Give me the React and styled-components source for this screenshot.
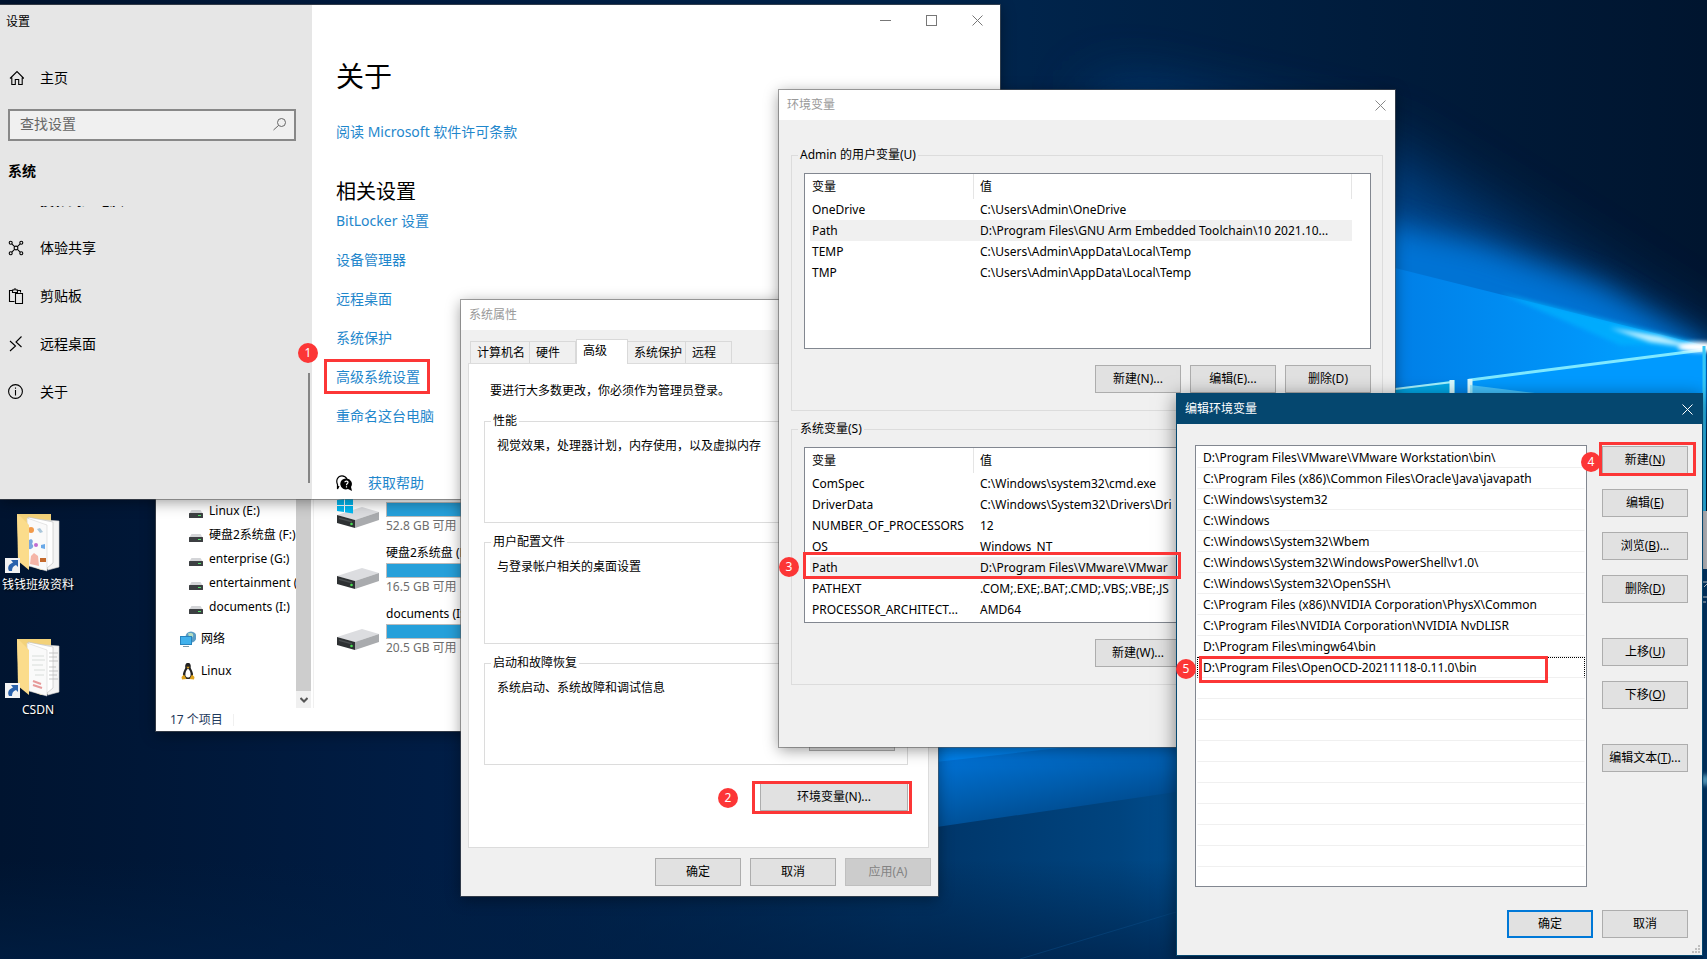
import styled, { createGlobalStyle } from "styled-components";

const GlobalStyle = createGlobalStyle`
    * {
        box-sizing: border-box;
    }
    body {
        margin: 0;
        overflow: hidden;
        font-family: "Noto Sans", "Noto Sans CJK SC", sans-serif;
        font-size: 12px;
        line-height: 16px;
        color: #000;
    }
    button, input {
        font: inherit;
        color: inherit;
    }
    ul {
        margin: 0;
        padding: 0;
        list-style: none;
    }
`

/* ---------- desktop ---------- */

const Desktop = styled.main`
    position: relative;
    width: 100%;
    height: 100vh;
    overflow: hidden;
    background: #001a3b;
`

const WallpaperSvg = styled.svg`
    position: absolute;
    inset: 0;
    width: 100%;
    height: 100%;
`

const Shortcut = styled.a`
    position: absolute;
    left: 0;
    top: ${props => props.$top}px;
    width: 76px;
    display: flex;
    flex-direction: column;
    align-items: center;
    gap: 4px;
    color: #fff;
    text-decoration: none;
    white-space: nowrap;
    text-shadow: 1px 1px 2px #000;
`

const EdgeIcon = styled.svg`
    position: absolute;
    right: 0;
    top: 511px;
`

/* ---------- windows ---------- */

const Window = styled.section`
    position: absolute;
    left: ${props => props.$x}px;
    top: ${props => props.$y}px;
    width: ${props => props.$w}px;
    height: ${props => props.$h}px;
    display: flex;
    flex-direction: ${props => props.$row ? 'row' : 'column'};
    background: ${props => props.$bg || '#f0f0f0'};
    box-shadow: 0 0 0 1px rgba(90, 90, 90, 0.55), 0 3px 14px rgba(0, 0, 0, 0.4);
`

const ActiveWindow = styled(Window)`
    border: 1px solid #05476f;
    box-shadow: 0 4px 18px rgba(0, 0, 0, 0.5);
`

const TitleBar = styled.header`
    flex: none;
    height: 30px;
    padding: 0 0 0 8px;
    display: flex;
    align-items: center;
    justify-content: space-between;
    background: ${props => props.$active ? '#05476f' : '#fff'};
    color: ${props => props.$active ? '#fff' : '#999'};
`

const CaptionButton = styled.button`
    width: ${props => props.$wide ? 46 : 30}px;
    height: ${props => props.$wide ? 31 : 29}px;
    padding: 0;
    border: 0;
    background: none;
    display: flex;
    align-items: center;
    justify-content: center;
`

const Button = styled.button`
    flex: none;
    width: ${props => props.$wide ? 148 : 86}px;
    height: 28px;
    padding: 0;
    border: ${props => props.$primary ? '2px solid #0078d7' : '1px solid #adadad'};
    background: #e1e1e1;
    white-space: nowrap;
    &:disabled {
        background: #ccc;
        border-color: #bfbfbf;
        color: #838383;
    }
`

const ButtonRow = styled.div`
    display: flex;
    justify-content: flex-end;
    gap: 8px;
`

const Group = styled.fieldset`
    margin: 0;
    min-width: 0;
    height: ${props => props.$h}px;
    padding: 0 11px 0 6px;
    border: 1px solid #dcdcdc;
    legend {
        padding: 0 2px;
    }
`

/* ---------- settings ---------- */

const Sidebar = styled.nav`
    flex: none;
    width: 312px;
    background: #e6e6e6;
    font-size: 14px;
    line-height: 20px;
    display: flex;
    flex-direction: column;
`

const AppName = styled.div`
    height: 32px;
    padding-left: 6px;
    font-size: 12px;
    line-height: 34px;
`

const NavItem = styled.a`
    display: flex;
    align-items: center;
    gap: 16px;
    height: 48px;
    padding-left: 8px;
    color: #000;
    text-decoration: none;
    svg {
        flex: none;
    }
`

const HomeItem = styled(NavItem)`
    height: 40px;
    margin-top: 21px;
`

const SearchBox = styled.label`
    display: flex;
    align-items: center;
    height: 32px;
    margin: 11px 16px 0 8px;
    padding: 0 7px 2px 10px;
    border: 2px solid #888;
    background: #f0f0f0;
    input {
        flex: 1;
        min-width: 0;
        padding: 0;
        border: 0;
        outline: 0;
        background: none;
    }
    input::placeholder {
        color: #666;
        opacity: 1;
    }
`

const Category = styled.h2`
    margin: 18px 0 23px 8px;
    font-size: 14px;
    line-height: 24px;
`

const NavScroll = styled.div`
    flex: 1;
    min-height: 0;
    display: flex;
    justify-content: space-between;
    overflow: hidden;
    ul {
        margin-top: -30px;
    }
`

const ScrollThumb = styled.div`
    align-self: flex-end;
    width: 2px;
    height: 110px;
    margin: 0 2px 16px 0;
    background: #858585;
`

const About = styled.div`
    flex: 1;
    display: flex;
    flex-direction: column;
    align-items: flex-start;
    padding-left: 24px;
    font-size: 14px;
    line-height: 20px;
    h1 {
        margin: 22px 0 28px;
        font-size: 28px;
        font-weight: 400;
        line-height: 36px;
    }
    h2 {
        margin: 36px 0 5px;
        font-size: 20px;
        font-weight: 400;
        line-height: 28px;
    }
`

const Captions = styled.div`
    align-self: flex-end;
    display: flex;
`

const Link = styled.a`
    color: #1f87cc;
    text-decoration: none;
`

const LinkList = styled.ul`
    display: flex;
    flex-direction: column;
    gap: 19px;
`

const Help = styled.div`
    display: flex;
    align-items: center;
    gap: 16px;
    margin-top: 47px;
`

/* ---------- explorer ---------- */

const ExplorerMain = styled.div`
    flex: 1;
    min-height: 0;
    display: flex;
    overflow: hidden;
`

const Tree = styled.ul`
    flex: none;
    width: 140px;
    && {
        padding-top: 19px;
    }
    overflow: hidden;
`

const TreeItem = styled.li`
    display: flex;
    align-items: center;
    gap: ${props => props.$root ? 5 : 6}px;
    height: 24px;
    margin-top: ${props => props.$root ? 8 : 0}px;
    padding-left: ${props => props.$root ? 24 : 33}px;
    white-space: nowrap;
    svg {
        flex: none;
    }
`

const TreeScroll = styled.div`
    flex: none;
    width: 18px;
    padding-right: 2px;
    border-right: 1px solid #f0f0f0;
    display: flex;
    flex-direction: column;
`

const TreeThumb = styled.div`
    flex: 1;
    background: #cdcdcd;
`

const TreeArrow = styled.div`
    height: 17px;
    display: flex;
    align-items: center;
    justify-content: center;
    background: #f0f0f0;
`

const DriveList = styled.ul`
    flex: 1;
    display: flex;
    flex-direction: column;
    gap: 11px;
    && {
        padding: 4px 0 0 23px;
    }
`

const Drive = styled.li`
    display: flex;
    align-items: flex-end;
    gap: 6px;
    height: 50px;
    white-space: nowrap;
`

const DriveInfo = styled.div`
    flex: 1;
    color: #6d6d6d;
    div {
        height: 15px;
        margin: 2px 0 1px;
        border: 1px solid #bcbcbc;
        background: #26a0da;
    }
    strong {
        display: block;
        font-weight: 400;
        color: #000;
    }
`

const StatusBar = styled.footer`
    height: 23px;
    padding-left: 14px;
    line-height: 24px;
    color: #1e395b;
    span {
        display: inline-block;
        width: 64px;
        line-height: 12px;
        border-right: 1px solid #f0f0f0;
    }
`

/* ---------- system properties ---------- */

const Tabs = styled.div`
    flex: none;
    display: flex;
    align-items: flex-end;
    height: 33px;
    padding-left: 9px;
`

const Tab = styled.button`
    width: ${props => props.$w}px;
    height: ${props => props.$active ? 25 : 22}px;
    margin-bottom: ${props => props.$active ? -1 : 0}px;
    padding: 0 0 ${props => props.$active ? 3 : 0}px 6px;
    border: 1px solid #d9d9d9;
    border-width: 1px 1px 0 ${props => props.$first || props.$active ? 1 : 0}px;
    background: ${props => props.$active ? '#fff' : '#f0f0f0'};
    text-align: left;
    white-space: nowrap;
    z-index: 1;
`

const TabPanel = styled.div`
    flex: 1;
    margin: 0 9px 0 7px;
    padding: 19px 20px 0 15px;
    border: 1px solid #dcdcdc;
    background: #fff;
    display: flex;
    flex-direction: column;
    gap: 11px;
    > p {
        margin: 0 0 3px 6px;
    }
    > button {
        align-self: flex-end;
        margin-top: 7px;
    }
`

const TabGroup = styled(Group)`
    padding: 9px 12px 0 12px;
    legend {
        margin-left: -6px;
    }
    p {
        margin: 0;
    }
    button {
        display: block;
        margin: 27px 0 0 auto;
    }
`

const SheetFooter = styled(ButtonRow)`
    gap: 9px;
    padding: 10px 7px;
`

/* ---------- environment variables ---------- */

const EnvBody = styled.div`
    padding: 27px 12px 0;
    display: flex;
    flex-direction: column;
    gap: 10px;
    ${ButtonRow} {
        gap: 9px;
        margin-top: 16px;
    }
`

const ListBox = styled.div`
    height: 176px;
    margin: 10px 0 0 6px;
    border: 1px solid #828790;
    background: #fff;
    overflow: hidden;
`

const VarTable = styled.table`
    width: calc(100% - 23px);
    margin-left: 5px;
    border-collapse: separate;
    border-spacing: 0;
    table-layout: fixed;
    th, td {
        height: 21px;
        padding: 0 0 0 6px;
        font-weight: 400;
        text-align: left;
        white-space: nowrap;
        overflow: hidden;
    }
    th {
        height: 25px;
        border-right: 1px solid #e5e5e5;
    }
    th:first-child {
        width: 164px;
    }
    th:first-child, td:first-child {
        padding-left: 2px;
    }
`

const VarRow = styled.tr`
    background: ${props => props.$selected ? '#f0f0f0' : 'transparent'};
`

/* ---------- edit variable ---------- */

const EditBody = styled.div`
    flex: 1;
    min-height: 0;
    display: flex;
    gap: 15px;
    padding: 21px 14px 0 18px;
`

const PathList = styled.ul`
    flex: 1;
    && {
        padding: 1px;
    }
    border: 1px solid #828790;
    background: #fff;
    overflow: hidden;
`

const PathItem = styled.li`
    height: 21px;
    padding-left: 5px;
    line-height: 19px;
    border: 1px dotted ${props => props.$focused ? '#000' : 'transparent'};
    border-bottom: 1px solid #f0f0f0;
    white-space: nowrap;
`

const ButtonColumn = styled.div`
    display: flex;
    flex-direction: column;
    gap: 15px;
    padding-top: 1px;
`

const Spacer = styled.div`
    height: 5px;
`

const EditFooter = styled(ButtonRow)`
    gap: 9px;
    padding: 23px 14px 17px;
`

const Grip = styled.svg`
    position: absolute;
    right: 2px;
    bottom: 2px;
`

/* ---------- numbered marks over the windows ---------- */

const Frame = styled.div`
    position: absolute;
    left: ${props => props.$x}px;
    top: ${props => props.$y}px;
    width: ${props => props.$w}px;
    height: ${props => props.$h}px;
    border: 3px solid #fc3636;
`

const Badge = styled.span`
    position: absolute;
    left: ${props => props.$x}px;
    top: ${props => props.$y}px;
    width: 20px;
    height: 20px;
    border-radius: 50%;
    background: #fc3636;
    color: #fff;
    line-height: 20px;
    text-align: center;
`

const userVars = [
    ['OneDrive', 'C:\\Users\\Admin\\OneDrive'],
    ['Path', 'D:\\Program Files\\GNU Arm Embedded Toolchain\\10 2021.10...'],
    ['TEMP', 'C:\\Users\\Admin\\AppData\\Local\\Temp'],
    ['TMP', 'C:\\Users\\Admin\\AppData\\Local\\Temp'],
];

const systemVars = [
    ['ComSpec', 'C:\\Windows\\system32\\cmd.exe'],
    ['DriverData', 'C:\\Windows\\System32\\Drivers\\Dri'],
    ['NUMBER_OF_PROCESSORS', '12'],
    ['OS', 'Windows_NT'],
    ['Path', 'D:\\Program Files\\VMware\\VMwar'],
    ['PATHEXT', '.COM;.EXE;.BAT;.CMD;.VBS;.VBE;.JS'],
    ['PROCESSOR_ARCHITECT...', 'AMD64'],
];

const paths = [
    'D:\\Program Files\\VMware\\VMware Workstation\\bin\\',
    'C:\\Program Files (x86)\\Common Files\\Oracle\\Java\\javapath',
    'C:\\Windows\\system32',
    'C:\\Windows',
    'C:\\Windows\\System32\\Wbem',
    'C:\\Windows\\System32\\WindowsPowerShell\\v1.0\\',
    'C:\\Windows\\System32\\OpenSSH\\',
    'C:\\Program Files (x86)\\NVIDIA Corporation\\PhysX\\Common',
    'C:\\Program Files\\NVIDIA Corporation\\NVIDIA NvDLISR',
    'D:\\Program Files\\mingw64\\bin',
    'D:\\Program Files\\OpenOCD-20211118-0.11.0\\bin',
];
const emptyRows = 9;

const marks = [
    { n: 1, badge: [298, 343], frame: [324, 359, 106, 35] },
    { n: 2, badge: [718, 788], frame: [752, 781, 160, 33] },
    { n: 3, badge: [779, 557], frame: [803, 552, 378, 27] },
    { n: 4, badge: [1581, 452], frame: [1599, 442, 97, 34] },
    { n: 5, badge: [1176, 659], frame: [1199, 656, 349, 27] },
];

const relatedLinks = ['BitLocker 设置', '设备管理器', '远程桌面', '系统保护', '高级系统设置', '重命名这台电脑'];

const Wallpaper = () => (
    <WallpaperSvg viewBox="0 0 1707 959" preserveAspectRatio="none" aria-hidden="true">
        <defs>
            <linearGradient id="night" x1="0" y1="0" x2="1" y2="0">
                <stop offset="0" stopColor="#001430" />
                <stop offset="0.25" stopColor="#001d45" />
                <stop offset="0.55" stopColor="#00264f" />
                <stop offset="0.8" stopColor="#001c3c" />
                <stop offset="1" stopColor="#00152f" />
            </linearGradient>
            <linearGradient id="beam" x1="0" y1="0" x2="1" y2="0">
                <stop offset="0" stopColor="#0080e8" />
                <stop offset="0.55" stopColor="#0079e2" />
                <stop offset="0.85" stopColor="#0096fa" />
                <stop offset="1" stopColor="#00aaff" />
            </linearGradient>
            <linearGradient id="lower" gradientUnits="userSpaceOnUse" x1="1040" y1="745" x2="1055" y2="830">
                <stop offset="0" stopColor="#0070d2" />
                <stop offset="0.5" stopColor="#005cac" />
                <stop offset="1" stopColor="#004584" />
            </linearGradient>
            <linearGradient id="deep" gradientUnits="userSpaceOnUse" x1="450" y1="900" x2="1240" y2="860">
                <stop offset="0" stopColor="#001d42" stopOpacity="0" />
                <stop offset="0.6" stopColor="#003568" />
                <stop offset="0.85" stopColor="#00447f" />
                <stop offset="1" stopColor="#00569e" />
            </linearGradient>
            <linearGradient id="floor" x1="0" y1="0" x2="0" y2="1">
                <stop offset="0" stopColor="#001f42" stopOpacity="0" />
                <stop offset="1" stopColor="#001f45" stopOpacity="0.7" />
            </linearGradient>
            <filter id="soft30" x="-50%" y="-50%" width="200%" height="200%">
                <feGaussianBlur stdDeviation="34" />
            </filter>
            <filter id="soft10" x="-50%" y="-50%" width="200%" height="200%">
                <feGaussianBlur stdDeviation="14" />
            </filter>
            <filter id="soft2" x="-50%" y="-50%" width="200%" height="200%">
                <feGaussianBlur stdDeviation="2" />
            </filter>
        </defs>
        <rect width="1707" height="959" fill="url(#night)" />
        <path d="M1720 360 L1560 260 L1380 150 L1100 90 V420 H1720 Z" fill="#004f9e" opacity="0.8" filter="url(#soft30)" />
        <path d="M1715 350 L1600 285 L1480 245 L1390 225 L1200 200 V420 H1715 Z" fill="#007ce2" opacity="0.85" filter="url(#soft10)" />
        <path d="M1706 346 L1395 268 L900 145 V780 L1176 735 L1706 690 Z" fill="url(#beam)" />
        <path d="M1704 344 L1600 318 L1500 293 L1620 345 Z" fill="#00b4ff" opacity="0.7" filter="url(#soft2)" />
        <path d="M1706 350 L1660 336 L1610 328 L1650 342 Z" fill="#bff0ff" filter="url(#soft2)" />
        <path d="M1468 400 V379 L1704 348 V900 H1468 Z" fill="#009aff" />
        <path d="M1395 389 L1455 380 V400 H1395 Z" fill="#00a8e8" />
        <path d="M1470 400 V380 L1703 350" fill="none" stroke="#7fe9ff" strokeWidth="3" />
        <path d="M1395 389 L1453 382 V400" fill="none" stroke="#a5f2ff" strokeWidth="2" />
        <path d="M1452 380 V400 M1470 379 V400" stroke="#d9faff" strokeWidth="5" />
        <path d="M1470 385 L1535 393 H1470 Z" fill="#6fe0ff" opacity="0.6" />
        <ellipse cx="1700" cy="347" rx="22" ry="5" fill="#fff" filter="url(#soft2)" />
        <path d="M1704 346 V959" stroke="#35c4f5" strokeWidth="3" />
        <path d="M900 766 L1050 749 L1176 736 L1707 700 V959 H900 Z" fill="url(#lower)" />
        <path d="M930 828 L1176 792 L1707 720 V959 H0 V880 Z" fill="url(#deep)" />
        <path d="M0 860 H1707 V959 H0 Z" fill="url(#floor)" />
        <path d="M1020 959 L1176 912" stroke="#0a4c86" strokeWidth="1" opacity="0.5" />
        <path d="M1703 533 H1707 V959 H1703 Z" fill="#00396f" />
        <ellipse cx="1705" cy="780" rx="3" ry="6" fill="#7fd8ff" filter="url(#soft2)" />
    </WallpaperSvg>
);

const Folder = ({ photos }) => (
    <svg width="56" height="60" viewBox="0 0 56 60" aria-hidden="true">
        <path d="M7 1 H41 V8 H49 V54 L31 57 L9 48 Z" fill="#f3d27a" />
        <path d="M22 6 L49 8 V54 L38 57 Z" fill="#f4f4f4" stroke="#c9c9c9" strokeWidth="0.6" />
        <path d="M18 4 L43 9 L43 50 L37 55 Z" fill="#fff" stroke="#bdbdbd" strokeWidth="0.6" />
        <path d="M17 5 L37 12 V58 L19 53 Z" fill="#fafafa" stroke="#d5d5d5" strokeWidth="0.6" />
        {photos ? (
            <g>
                <circle cx="21" cy="17" r="3" fill="#f29a4a" />
                <path d="M27 16 L30 15 L33 19 L30 20 Z" fill="#a9c6da" />
                <path d="M19 27 C22 25 24 28 22 31 C25 33 22 37 19 36 Z" fill="#7aa7e0" />
                <circle cx="26" cy="32" r="2" fill="#c06bd0" />
                <path d="M31 32 L35 31 V36 L31 35 Z" fill="#6aa9e8" />
                <path d="M20 51 L21 43 L24 40 L28 43 L29 53 Z" fill="#f5b5a8" />
                <rect x="30" y="45" width="6" height="4" fill="#c56a2c" />
            </g>
        ) : (
            <g stroke="#b9b9b9" strokeWidth="0.8">
                <path d="M39 15 H48 M39 19 H47 M39 23 H48 M39 29 H46 M39 33 H48 M39 37 H47 M39 41 H48" />
                <path d="M22 18 H34 M22 22 H35 M22 27 H33 M24 32 H35 M25 37 H34" stroke="#cfd6d2" />
                <path d="M23 43 L31 46 M23 47 L32 50" stroke="#e79a9a" strokeWidth="2" />
            </g>
        )}
        <path d="M7 1 L10 3 L19 12 V57 L8 48 Z" fill="#fbdc8b" />
    </svg>
);

const ArrowOverlay = styled.svg`
    position: absolute;
    left: 5px;
    top: 45px;
`

const ShortcutArrow = () => (
    <ArrowOverlay width="15" height="15" viewBox="0 0 15 15" aria-hidden="true">
        <rect width="15" height="15" fill="#f3f3f3" />
        <path d="M6 2 H13 V9 L11 7 C8 8 7 10 7 13 H4 C2 9 4 6 8 4.500 Z" fill="#2a62ac" />
    </ArrowOverlay>
);

const CloseIcon = ({ color }) => (
    <svg width="11" height="11" viewBox="0 0 11 11" aria-hidden="true">
        <path d="M0.500 0.500 L10.500 10.500 M10.500 0.500 L0.500 10.500" stroke={color} fill="none" />
    </svg>
);

const NavIcon = ({ children }) => (
    <svg width="16" height="16" viewBox="0 0 16 16" fill="none" stroke="#000" strokeWidth="1.100" aria-hidden="true">
        {children}
    </svg>
);

const HomeIcon = () => (
    <NavIcon>
        <path d="M2 8.500 L9 1.500 L16 8.500 M3.800 7.500 V14.500 H7.300 V9.500 H10.700 V14.500 H14.200 V7.500" />
    </NavIcon>
);

const ShareIcon = () => (
    <NavIcon>
        <circle cx="8" cy="8" r="1.900" />
        <circle cx="2.700" cy="2.700" r="1.500" />
        <circle cx="13.300" cy="2.700" r="1.500" />
        <circle cx="2.700" cy="13.300" r="1.500" />
        <circle cx="13.300" cy="13.300" r="1.500" />
        <path d="M3.800 3.800 L6.600 6.600 M12.200 3.800 L9.400 6.600 M3.800 12.200 L6.600 9.400 M12.200 12.200 L9.400 9.400" />
    </NavIcon>
);

const ClipboardIcon = () => (
    <NavIcon>
        <path d="M6.500 13.500 H1.500 V2.500 H4.500 M9.500 2.500 H12.500 V4.500 M4.500 4.500 V2 H6 C6 0.300 8 0.300 8 2 H9.500 V4.500 Z" />
        <path d="M7.500 5.500 H14.500 V15.500 H7.500 Z" />
    </NavIcon>
);

const RemoteIcon = () => (
    <NavIcon>
        <path d="M2 5 L7.500 10 L2 15 M13.500 0.500 L8 6 L13.500 11" />
    </NavIcon>
);

const InfoIcon = () => (
    <NavIcon>
        <circle cx="7.500" cy="7.500" r="6.900" />
        <path d="M7.500 6 V11.500 M7.500 3.500 V4.800" />
    </NavIcon>
);

const SearchIcon = () => (
    <svg width="14" height="14" viewBox="0 0 14 14" fill="none" stroke="#666" aria-hidden="true">
        <circle cx="8.500" cy="5.500" r="4" />
        <path d="M5.500 8.500 L0.500 13" />
    </svg>
);

const HelpIcon = () => (
    <svg width="16" height="16" viewBox="0 0 16 16" aria-hidden="true">
        <path d="M3 11 L1.500 14 V9.500 C-0.500 5 2 0.800 6 0.800 C8.500 0.800 10 2 11 4" fill="none" stroke="#000" strokeWidth="1.200" />
        <path d="M10.500 3.500 A5.500 5.500 0 1 0 12 14 L16 16 L15 12 A5.500 5.500 0 0 0 10.500 3.500 Z" fill="#000" />
        <path d="M8.800 7.300 C9 5.600 12.200 5.700 12 7.500 C11.900 8.700 10.500 8.500 10.500 10.200 M10.500 11.300 V12.500" fill="none" stroke="#fff" strokeWidth="1.200" />
    </svg>
);

const SmallDrive = () => (
    <svg width="14" height="14" viewBox="0 0 14 14" aria-hidden="true">
        <path d="M2.500 6 H11.500 L14 10 H0 Z" fill="#d4d5d8" />
        <rect y="9" width="14" height="5" rx="0.500" fill="#3c3f42" />
        <rect x="9" y="11" width="3" height="1" fill="#52e06a" />
    </svg>
);

const BigDrive = ({ system }) => (
    <svg width="43" height="36" viewBox="0 0 43 36" aria-hidden="true">
        <path d="M0 17 L25 9 L42 14 L18 22 Z" fill="#dcdde0" />
        <path d="M18 22 L42 14 V22 L18 30 Z" fill="#a9abae" />
        <path d="M0 17 L18 22 V30 L0 25 Z" fill="#2e3133" />
        <path d="M2 19.500 L15 23 V24.500 L2 21 Z" fill="#4a4e50" />
        <circle cx="14.500" cy="26" r="1.300" fill="#45e04f" />
        {system && (
            <g fill="#00b9f2">
                <path d="M0 2 L7 1 V7 H0 Z M8 0.800 L16 0 V7 H8 Z M0 8 H7 V14 L0 13 Z M8 8 H16 V15.500 L8 14.300 Z" />
            </g>
        )}
    </svg>
);

const NetworkIcon = () => (
    <svg width="16" height="16" viewBox="0 0 16 16" aria-hidden="true">
        <circle cx="11" cy="6" r="5.500" fill="#5b9cc4" />
        <path d="M8 2 C10 3 11 1 13 3 C14 6 12 7 9 6 Z" fill="#b5dcc0" />
        <rect x="0.500" y="5.500" width="11" height="8" fill="#41b1ec" stroke="#2784bd" />
        <path d="M3 15.500 H9" stroke="#7b98a8" />
    </svg>
);

const TuxIcon = () => (
    <svg width="16" height="17" viewBox="0 0 16 17" aria-hidden="true">
        <path d="M8 0 C5.500 0 5 2 5.300 5 C4 8 2.500 10 3 13 L6 16 H10 L13 13 C13.500 10 12 8 10.700 5 C11 2 10.500 0 8 0 Z" fill="#222" />
        <path d="M8 5.500 C6 7 5 10 5.500 13 C7 15 9 15 10.500 13 C11 10 10 7 8 5.500 Z" fill="#fff" />
        <path d="M6.300 3.800 L8 5.800 L9.700 3.800 Z" fill="#e6a91c" />
        <path d="M1.500 14 L4 11.500 L6.500 16 L2 16.500 Z M14.500 14 L12 11.500 L9.500 16 L14 16.500 Z" fill="#dfa21a" />
    </svg>
);

const Explorer = () => (
    <Window $x={156} $y={480} $w={520} $h={251} $bg="#fff">
        <ExplorerMain>
            <Tree>
                {['Linux (E:)', '硬盘2系统盘 (F:)', 'enterprise (G:)', 'entertainment (', 'documents (I:)'].map(name => (
                    <TreeItem key={name}><SmallDrive />{name}</TreeItem>
                ))}
                <TreeItem $root><NetworkIcon />网络</TreeItem>
                <TreeItem $root><TuxIcon />Linux</TreeItem>
            </Tree>
            <TreeScroll>
                <TreeThumb />
                <TreeArrow>
                    <svg width="8" height="6" viewBox="0 0 8 6" aria-hidden="true">
                        <path d="M0.500 1 L4 4.500 L7.500 1" fill="none" stroke="#555" strokeWidth="2" />
                    </svg>
                </TreeArrow>
            </TreeScroll>
            <DriveList>
                <Drive>
                    <BigDrive system />
                    <DriveInfo><div />52.8 GB 可用</DriveInfo>
                </Drive>
                <Drive>
                    <BigDrive />
                    <DriveInfo><strong>硬盘2系统盘 (F:)</strong><div />16.5 GB 可用</DriveInfo>
                </Drive>
                <Drive>
                    <BigDrive />
                    <DriveInfo><strong>documents (I:)</strong><div />20.5 GB 可用</DriveInfo>
                </Drive>
            </DriveList>
        </ExplorerMain>
        <StatusBar><span>17 个项目</span></StatusBar>
    </Window>
);

const Settings = () => (
    <Window $x={0} $y={5} $w={1000} $h={494} $bg="#fff" $row>
        <Sidebar>
            <AppName>设置</AppName>
            <HomeItem href="#home"><HomeIcon />主页</HomeItem>
            <SearchBox>
                <input type="text" placeholder="查找设置" aria-label="查找设置" />
                <SearchIcon />
            </SearchBox>
            <Category>系统</Category>
            <NavScroll>
                <ul>
                    <li><NavItem href="#project"><NavIcon />投影到此电脑</NavItem></li>
                    <li><NavItem href="#share"><ShareIcon />体验共享</NavItem></li>
                    <li><NavItem href="#clipboard"><ClipboardIcon />剪贴板</NavItem></li>
                    <li><NavItem href="#remote"><RemoteIcon />远程桌面</NavItem></li>
                    <li><NavItem href="#about"><InfoIcon />关于</NavItem></li>
                </ul>
                <ScrollThumb />
            </NavScroll>
        </Sidebar>
        <About>
            <Captions>
                <CaptionButton $wide aria-label="最小化">
                    <svg width="11" height="11" aria-hidden="true"><path d="M0 5.500 H11" stroke="#777" /></svg>
                </CaptionButton>
                <CaptionButton $wide aria-label="最大化">
                    <svg width="11" height="11" aria-hidden="true"><rect x="0.500" y="0.500" width="10" height="10" fill="none" stroke="#777" /></svg>
                </CaptionButton>
                <CaptionButton $wide aria-label="关闭"><CloseIcon color="#777" /></CaptionButton>
            </Captions>
            <h1>关于</h1>
            <Link href="#license">阅读 Microsoft 软件许可条款</Link>
            <h2>相关设置</h2>
            <LinkList>
                {relatedLinks.map(text => (
                    <li key={text}><Link href="#related">{text}</Link></li>
                ))}
            </LinkList>
            <Help><HelpIcon /><Link href="#help">获取帮助</Link></Help>
        </About>
    </Window>
);

const SystemProperties = () => (
    <Window $x={461} $y={300} $w={477} $h={596}>
        <TitleBar>系统属性</TitleBar>
        <Tabs role="tablist">
            <Tab role="tab" $w={60} $first>计算机名</Tab>
            <Tab role="tab" $w={46}>硬件</Tab>
            <Tab role="tab" $w={52} $active aria-selected="true">高级</Tab>
            <Tab role="tab" $w={58}>系统保护</Tab>
            <Tab role="tab" $w={46}>远程</Tab>
        </Tabs>
        <TabPanel role="tabpanel">
            <p>要进行大多数更改，你必须作为管理员登录。</p>
            <TabGroup $h={110}>
                <legend>性能</legend>
                <p>视觉效果，处理器计划，内存使用，以及虚拟内存</p>
            </TabGroup>
            <TabGroup $h={110}>
                <legend>用户配置文件</legend>
                <p>与登录帐户相关的桌面设置</p>
            </TabGroup>
            <TabGroup $h={110}>
                <legend>启动和故障恢复</legend>
                <p>系统启动、系统故障和调试信息</p>
                <Button aria-label="设置" />
            </TabGroup>
            <Button $wide>环境变量(N)...</Button>
        </TabPanel>
        <SheetFooter>
            <Button>确定</Button>
            <Button>取消</Button>
            <Button disabled>应用(A)</Button>
        </SheetFooter>
    </Window>
);

const Variables = ({ title, rows, buttons }) => (
    <Group $h={264}>
        <legend>{title}</legend>
        <ListBox>
            <VarTable>
                <thead>
                    <tr><th>变量</th><th>值</th></tr>
                </thead>
                <tbody>
                    {rows.map(([name, value]) => (
                        <VarRow key={name} $selected={name === 'Path'}>
                            <td>{name}</td>
                            <td>{value}</td>
                        </VarRow>
                    ))}
                </tbody>
            </VarTable>
        </ListBox>
        <ButtonRow>
            {buttons.map((text, i) => <Button key={i}>{text}</Button>)}
        </ButtonRow>
    </Group>
);

const EnvironmentVariables = () => (
    <Window $x={779} $y={90} $w={616} $h={657}>
        <TitleBar>
            环境变量
            <CaptionButton aria-label="关闭"><CloseIcon color="#888" /></CaptionButton>
        </TitleBar>
        <EnvBody>
            <Variables title="Admin 的用户变量(U)" rows={userVars} buttons={['新建(N)...', '编辑(E)...', '删除(D)']} />
            <Variables title="系统变量(S)" rows={systemVars} buttons={['新建(W)...', '', '']} />
        </EnvBody>
    </Window>
);

const EditVariable = () => (
    <ActiveWindow $x={1176} $y={393} $w={527} $h={563}>
        <TitleBar $active>
            编辑环境变量
            <CaptionButton aria-label="关闭"><CloseIcon color="#fff" /></CaptionButton>
        </TitleBar>
        <EditBody>
            <PathList>
                {paths.map((path, i) => (
                    <PathItem key={path} $focused={i === paths.length - 1}>{path}</PathItem>
                ))}
                {Array.from({ length: emptyRows }, (_, i) => <PathItem key={i} />)}
            </PathList>
            <ButtonColumn>
                <Button>新建(<u>N</u>)</Button>
                <Button>编辑(<u>E</u>)</Button>
                <Button>浏览(<u>B</u>)...</Button>
                <Button>删除(<u>D</u>)</Button>
                <Spacer />
                <Button>上移(<u>U</u>)</Button>
                <Button>下移(<u>O</u>)</Button>
                <Spacer />
                <Button>编辑文本(<u>T</u>)...</Button>
            </ButtonColumn>
        </EditBody>
        <EditFooter>
            <Button $primary>确定</Button>
            <Button>取消</Button>
        </EditFooter>
        <Grip width="8" height="8" aria-hidden="true">
            <path d="M6 0 h2 v2 h-2 Z M3 3 h2 v2 h-2 Z M6 3 h2 v2 h-2 Z M0 6 h2 v2 h-2 Z M3 6 h2 v2 h-2 Z M6 6 h2 v2 h-2 Z" fill="#bfbfbf" />
        </Grip>
    </ActiveWindow>
);

const App = () => (
    <>
        <GlobalStyle />
        <Desktop>
            <Wallpaper />
            <EdgeIcon width="4" height="96" aria-hidden="true">
                <rect width="4" height="58" fill="#cfcfd4" />
                <path d="M0 71 H4 M1 76 L4 73 M0 86 H4 M0 91 H3" stroke="#dfe6ee" />
            </EdgeIcon>
            <Shortcut href="#data" $top={513}><Folder photos /><ShortcutArrow />钱钱班级资料</Shortcut>
            <Shortcut href="#csdn" $top={638}><Folder /><ShortcutArrow />CSDN</Shortcut>
            <Explorer />
            <Settings />
            <SystemProperties />
            <EnvironmentVariables />
            <EditVariable />
            {marks.map(({ n, badge, frame }) => (
                <div key={n}>
                    <Frame $x={frame[0]} $y={frame[1]} $w={frame[2]} $h={frame[3]} />
                    <Badge $x={badge[0]} $y={badge[1]}>{n}</Badge>
                </div>
            ))}
        </Desktop>
    </>
);

export default App;
